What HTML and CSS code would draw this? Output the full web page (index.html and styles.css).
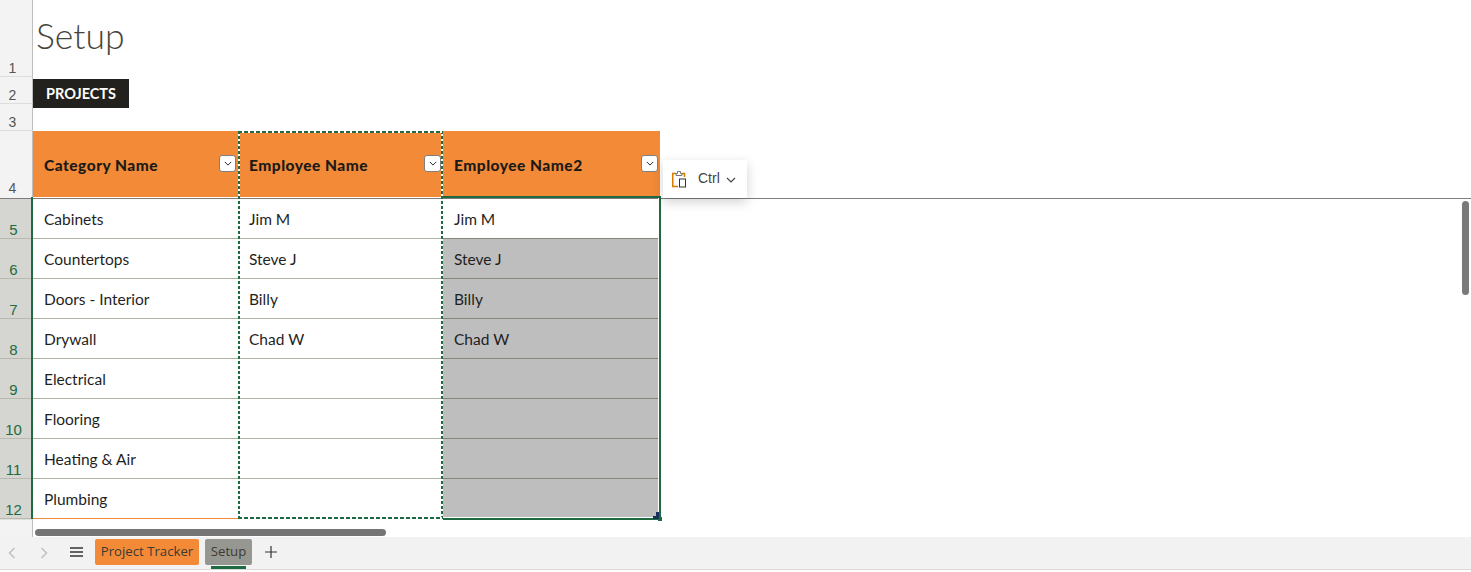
FILE: index.html
```html
<!DOCTYPE html>
<html lang="en">
<head>
<meta charset="utf-8">
<title>Setup</title>
<link rel="stylesheet" href="styles.css">
</head>
<body>
<div class="app">
  <main class="sheet">
    <div class="grid">
      <div class="rh">1</div>
      <div class="title-cell">Setup</div>
      <div class="rh">2</div>
      <div class="label-row"><span class="label">PROJECTS</span></div>
      <div class="rh">3</div>
      <div class="blank-row"></div>
      <div class="rh rh-tall">4</div>
      <div class="th"><span>Category Name</span><span class="fbtn"><svg viewBox="0 0 10 6" width="8" height="5"><path d="M1 1l4 4 4-4" class="chev"/></svg></span></div>
      <div class="th"><span>Employee Name</span><span class="fbtn"><svg viewBox="0 0 10 6" width="8" height="5"><path d="M1 1l4 4 4-4" class="chev"/></svg></span></div>
      <div class="th"><span>Employee Name2</span><span class="fbtn"><svg viewBox="0 0 10 6" width="8" height="5"><path d="M1 1l4 4 4-4" class="chev"/></svg></span></div>

      <div class="rh sel">5</div><div class="td">Cabinets</div><div class="td">Jim M</div><div class="td dark-line">Jim M</div>
      <div class="rh sel">6</div><div class="td">Countertops</div><div class="td">Steve J</div><div class="td gray">Steve J</div>
      <div class="rh sel">7</div><div class="td">Doors - Interior</div><div class="td">Billy</div><div class="td gray">Billy</div>
      <div class="rh sel">8</div><div class="td">Drywall</div><div class="td">Chad W</div><div class="td gray">Chad W</div>
      <div class="rh sel">9</div><div class="td">Electrical</div><div class="td"></div><div class="td gray"></div>
      <div class="rh sel">10</div><div class="td">Flooring</div><div class="td"></div><div class="td gray"></div>
      <div class="rh sel">11</div><div class="td">Heating &amp; Air</div><div class="td"></div><div class="td gray"></div>
      <div class="rh sel">12</div><div class="td end">Plumbing</div><div class="td end"></div><div class="td gray end"></div>
    </div>
    <div class="freeze-line"></div>
    <div class="sel-edge"></div>
    <div class="ants"></div>
    <div class="selection">
      <span class="handle"></span>
      <svg class="cursor" viewBox="0 0 7 7" width="7" height="7"><path d="M3 0H6V7H0V4H3Z"/></svg>
    </div>
    <div class="paste">
      <svg class="paste-ic" viewBox="0 0 16 18" width="16" height="18">
        <path d="M4 2.500H.75V15.500H6" class="clip-o"/>
        <path d="M10 2.500H12.500V6" class="clip-o"/>
        <path d="M4 4.500V2.500H5.500V.5H8.500V2.500H10V4.500Z" class="clip-g"/>
        <rect x="7.500" y="8" width="6" height="8" class="clip-d"/>
      </svg>
      <span class="ctrl">Ctrl</span>
      <svg class="ctrl-chev" viewBox="0 0 10 6" width="10" height="6"><path d="M1 1l4 4 4-4" class="chev2"/></svg>
    </div>
    <div class="vthumb"></div>
  </main>
  <div class="hscroll"><div class="corner"></div><div class="hthumb"></div></div>
  <footer class="tabs">
    <svg class="nav" viewBox="0 0 8 12" width="8" height="12"><path d="M6.500 1l-5 5 5 5"/></svg>
    <svg class="nav nav2" viewBox="0 0 8 12" width="8" height="12"><path d="M1.500 1l5 5-5 5"/></svg>
    <svg class="menu" viewBox="0 0 13 10" width="13" height="10"><path d="M0 1h13M0 5h13M0 9h13"/></svg>
    <span class="tab tab-o">Project Tracker</span>
    <span class="tab tab-g">Setup</span>
    <svg class="plus" viewBox="0 0 12 12" width="12" height="12"><path d="M6 0v12M0 6h12"/></svg>
  </footer>
</div>
</body>
</html>
```
FILE: styles.css
```css
* { box-sizing: border-box; }
html, body { margin: 0; height: 100%; }
body { background: #fff; overflow: hidden; font-family: "Lato", "Liberation Sans", sans-serif; color: #222; }
.app { width: 1471px; height: 570px; display: flex; flex-direction: column; }
.sheet { flex: 0 0 519px; position: relative; }
.grid {
  display: grid;
  grid-template-columns: 33px 205px 205px 217px;
  grid-template-rows: 77px 27px 27px 68px repeat(8, 40px);
  width: 1471px;
}
.rh {
  grid-column: 1;
  background: #f3f3f3;
  border-right: 1px solid #bdbdbd;
  border-bottom: 1px solid #dedede;
  color: #555;
  font: 14px/1 "Liberation Sans", sans-serif;
  display: flex; align-items: flex-end; justify-content: center;
  padding-right: 7px;
  padding-bottom: 1px;
}
.rh-tall { padding-bottom: 3px; }
.rh.sel { background: #d5d5d1; color: #1e6b41; border-bottom-color: #b8b8ae; border-right: 0; padding-right: 6px; font-size: 15px; }
.title-cell { grid-column: 2 / -1; font: 300 35.5px/1 "Lato", sans-serif; color: #46443a; padding: 18px 0 0 3px; }
.label-row { grid-column: 2 / -1; }
.label { display: block; width: 96px; height: 29px; margin-top: 2px; background: #22211d; color: #fff; font-weight: 700; font-size: 14.5px; line-height: 29px; padding-left: 13px; }
.blank-row { grid-column: 2 / -1; }
.th {
  background: #f28a38; color: #1d1b17; font-weight: 900; font-size: 15.5px;
  display: flex; align-items: center; justify-content: space-between;
  padding: 2px 2px 0 11px; letter-spacing: .5px;
  height: 66px;
}
.fbtn { width: 17px; height: 17px; background: #fff; border: 1px solid #7f7f7f; border-radius: 3px; display: flex; align-items: center; justify-content: center; margin-top: -3px; }
.chev { fill: none; stroke: #222; stroke-width: 1.200; }
.chev2 { fill: none; stroke: #444; stroke-width: 1.200; }
.td {
  font-size: 15.5px; display: flex; align-items: center; padding-left: 11px; padding-top: 1px;
  border-bottom: 1px solid #b2b29e; color: #1f1f1f; background: #fff;
}
.td.dark-line { border-bottom-color: #85857a; }
.td.gray { background: #bebebe; border-bottom-color: #85857a; }
.td.end { border-bottom: 1px solid #f28a38; }
.freeze-line { position: absolute; left: 0; top: 198px; width: 1471px; height: 1px; background: #7d7d7d; z-index: 1; }
.sel-edge { position: absolute; left: 31px; top: 197px; width: 2px; height: 322px; background: #1e6b41; z-index: 2; }
.ants {
  position: absolute; left: 238px; top: 131px; width: 205px; height: 388px; z-index: 2;
  background:
    repeating-linear-gradient(90deg, #1e6b41 0 4px, #fff 4px 6px) top left / 100% 2px no-repeat,
    repeating-linear-gradient(90deg, #1e6b41 0 4px, #fff 4px 6px) bottom left / 100% 2px no-repeat,
    repeating-linear-gradient(0deg, #1e6b41 0 3px, #fff 3px 5px) top left / 2px 100% no-repeat,
    repeating-linear-gradient(0deg, #1e6b41 0 3px, #fff 3px 5px) top right / 2px 100% no-repeat;
}
.selection {
  position: absolute; left: 443px; top: 196px; width: 218px; height: 324px; z-index: 3;
  border: 2px solid #1e6b41; border-left: 0;
  box-shadow: inset -1px -1px 0 #fff;
}
.handle { position: absolute; right: -3px; bottom: -3px; width: 4px; height: 4px; background: #1e6b41; }
.cursor { position: absolute; right: -1px; bottom: -1px; fill: #17305e; }
.paste {
  position: absolute; left: 663px; top: 160px; width: 84px; height: 38px; background: #fff; z-index: 5;
  box-shadow: 0 4px 12px rgba(0,0,0,.18);
  display: flex; align-items: center; font: 14px/1 "Liberation Sans", sans-serif; color: #444; padding-left: 9px;
}
.ctrl { margin-left: 10px; margin-right: 6px; margin-top: -2px; }
.ctrl-chev { margin-top: 2px; }
.paste-ic { margin-top: 2px; }
.clip-o { fill: none; stroke: #d97a00; stroke-width: 1.500; }
.clip-g { fill: #fff; stroke: #777; stroke-width: 1; }
.clip-d { fill: #fff; stroke: #333; stroke-width: 1; }
.vthumb { position: absolute; left: 1462px; top: 201px; width: 7px; height: 94px; background: #7a7a7a; border-radius: 4px; z-index: 4; }
.hscroll { flex: 0 0 18px; display: flex; }
.corner { width: 33px; background: #f3f3f3; border-right: 1px solid #bdbdbd; border-top: 1px solid #dedede; }
.hthumb { width: 351px; height: 7px; margin: 10px 0 0 2px; background: #757575; border-radius: 4px; }
.tabs { flex: 0 0 33px; background: #f2f2f2; border-bottom: 1px solid #d9d9d9; display: flex; align-items: flex-start; font: 13.2px/1 "Open Sans", sans-serif; padding-top: 2px; }
.tabs svg path { fill: none; }
.nav { margin: 8px 0 0 8px; }
.nav path { stroke: #bdbdbd; stroke-width: 1.400; }
.nav2 { margin-left: 24px; }
.menu { margin: 8px 0 0 22px; }
.menu path { stroke: #333; stroke-width: 1.400; }
.tab { height: 26px; display: flex; align-items: center; justify-content: center; border-radius: 2px; color: #3b3b33; }
.tab-o { width: 104px; background: #f28a38; margin-left: 12px; }
.tab-g { width: 47px; background: #979791; margin-left: 6px; position: relative; }
.tab-g::after { content: ""; position: absolute; left: 6px; width: 35px; height: 3px; bottom: -4px; background: #1e6b41; }
.plus { margin: 7px 0 0 13px; }
.plus path { stroke: #333; stroke-width: 1.200; }
```
